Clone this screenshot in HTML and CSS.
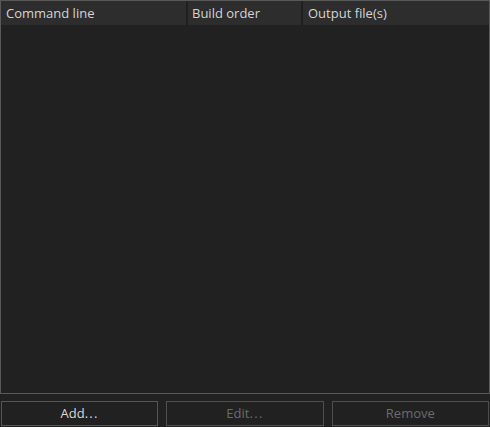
FILE: index.html
```html
<!DOCTYPE html>
<html>
<head>
<meta charset="utf-8">
<link rel="stylesheet" href="styles.css">
</head>
<body>
<div class="panel">
  <div class="table">
    <div class="header">
      <div class="col col-cmd">Command line</div>
      <div class="col col-order">Build order</div>
      <div class="col col-out">Output file(s)</div>
    </div>
    <div class="body"></div>
  </div>
  <div class="buttons">
    <button class="btn">Add<span class="dots">...</span></button>
    <button class="btn" disabled>Edit<span class="dots">...</span></button>
    <button class="btn" disabled>Remove</button>
  </div>
</div>
</body>
</html>
```

FILE: styles.css
```css
html, body {
  margin: 0;
  padding: 0;
  background: #212121;
}
body {
  width: 490px;
  height: 427px;
  overflow: hidden;
  font-family: "Open Sans", "DejaVu Sans", sans-serif;
  font-size: 13px;
}
.panel {
  display: flex;
  flex-direction: column;
}
.table {
  box-sizing: border-box;
  width: 490px;
  height: 394px;
  border: 1px solid #595959;
  display: flex;
  flex-direction: column;
}
.header {
  display: flex;
  height: 24px;
  background: #2d2d2d;
}
.col {
  box-sizing: border-box;
  height: 24px;
  line-height: 24px;
  color: #d4d4d4;
  padding-left: 5px;
  white-space: nowrap;
}
.col-cmd {
  width: 187px;
  border-right: 2px solid #1f1f1f;
}
.col-order {
  width: 115px;
  padding-left: 4px;
  border-right: 2px solid #1f1f1f;
}
.col-out {
  flex: 1;
}
.body {
  flex: 1;
  background: #212121;
}
.buttons {
  display: grid;
  grid-template-columns: 1fr 1fr 1fr;
  column-gap: 8px;
  margin-top: 7px;
  padding-left: 1px;
  width: 489px;
  box-sizing: border-box;
}
.btn {
  height: 25px;
  margin: 0;
  padding: 0;
  background: #212121;
  border: 1px solid #555555;
  color: #d8d8d8;
  font-family: "Open Sans", "DejaVu Sans", sans-serif;
  font-size: 13px;
  line-height: 23px;
}
.btn:disabled {
  color: #6b6b6b;
  border-color: #4f4f4f;
}
.dots {
  letter-spacing: 1.3px;
}
```
